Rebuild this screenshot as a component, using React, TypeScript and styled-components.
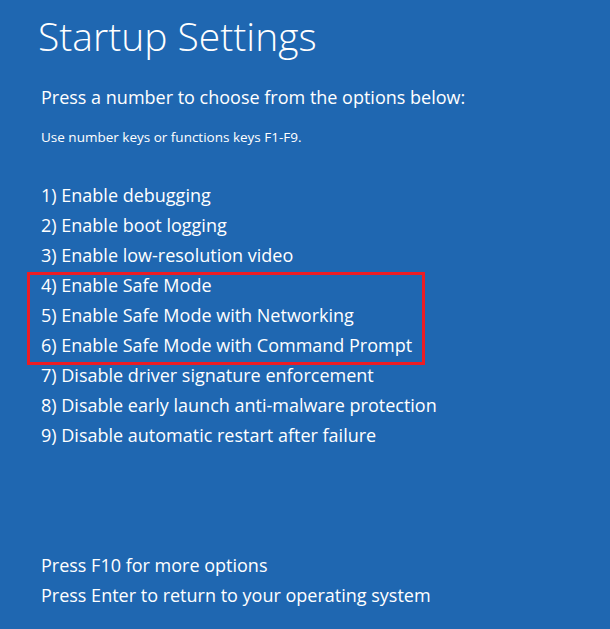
import React from "react";
import styled, { createGlobalStyle } from "styled-components";

const Global = createGlobalStyle`
  html, body {
    margin: 0;
    padding: 0;
    background: #1f67b1;
  }
  *, *::before, *::after { box-sizing: border-box; }
`;

const Screen = styled.main`
  width: 610px;
  height: 629px;
  background: #1f67b1;
  color: #ffffff;
  font-family: "Open Sans", "Noto Sans", sans-serif;
  padding: 17px 0 0 40px;
  display: flex;
  flex-direction: column;
  overflow: hidden;
`;

const Title = styled.h1`
  margin: 0;
  font-size: 39px;
  line-height: 38px;
  font-weight: 300;
  margin-left: -2px;
`;

const Prompt = styled.p`
  margin: 30px 0 0 1px;
  font-size: 18px;
  line-height: 24px;
  font-weight: 400;
`;

const Hint = styled.p`
  margin: 19px 0 0 1px;
  font-size: 13.5px;
  line-height: 18px;
  font-weight: 400;
`;

const OptionList = styled.ol`
  list-style: none;
  margin: 34px 0 0 1px;
  padding: 0;
  display: flex;
  flex-direction: column;
`;

const Highlight = styled.div`
  position: relative;
  display: flex;
  flex-direction: column;
  &::after {
    content: "";
    position: absolute;
    left: -14px;
    top: 2px;
    width: 398px;
    height: 93px;
    border: 3px solid #ed1c24;
    pointer-events: none;
  }
`;

const Option = styled.li`
  font-size: 18px;
  line-height: 30px;
  height: 30px;
  white-space: nowrap;
`;

const Footer = styled.div`
  margin: 100px 0 0 1px;
  display: flex;
  flex-direction: column;
`;

const FooterLine = styled.p`
  margin: 0;
  font-size: 18px;
  line-height: 30px;
`;

const before = [
  "1) Enable debugging",
  "2) Enable boot logging",
  "3) Enable low-resolution video",
];
const highlighted = [
  "4) Enable Safe Mode",
  "5) Enable Safe Mode with Networking",
  "6) Enable Safe Mode with Command Prompt",
];
const after = [
  "7) Disable driver signature enforcement",
  "8) Disable early launch anti-malware protection",
  "9) Disable automatic restart after failure",
];

export default function App() {
  return (
    <>
      <Global />
      <Screen>
        <Title>Startup Settings</Title>
        <Prompt>Press a number to choose from the options below:</Prompt>
        <Hint>Use number keys or functions keys F1-F9.</Hint>
        <OptionList>
          {before.map((t) => (
            <Option key={t}>{t}</Option>
          ))}
          <Highlight>
            {highlighted.map((t) => (
              <Option key={t}>{t}</Option>
            ))}
          </Highlight>
          {after.map((t) => (
            <Option key={t}>{t}</Option>
          ))}
        </OptionList>
        <Footer>
          <FooterLine>Press F10 for more options</FooterLine>
          <FooterLine>Press Enter to return to your operating system</FooterLine>
        </Footer>
      </Screen>
    </>
  );
}
